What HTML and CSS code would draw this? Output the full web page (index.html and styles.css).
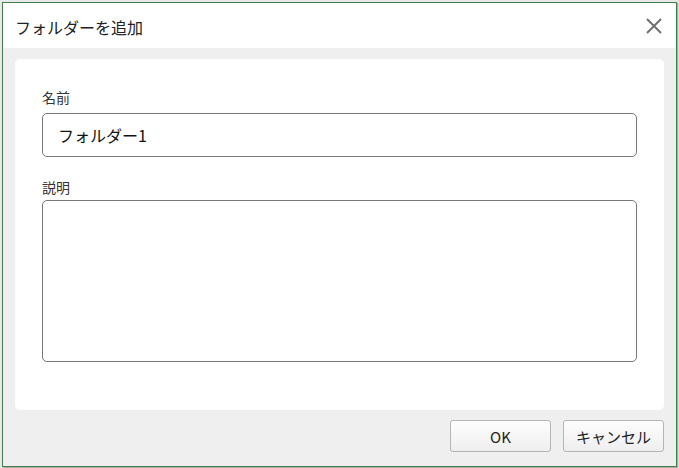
FILE: index.html
```html
<!DOCTYPE html>
<html lang="ja">
<head>
<meta charset="utf-8">
<link rel="stylesheet" href="styles.css">
</head>
<body>
<div class="dialog">
  <div class="titlebar">
    <span class="title">フォルダーを追加</span>
    <svg class="close" width="16" height="16" viewBox="0 0 16 16"><path d="M1 1L15 15M15 1L1 15" stroke="#707070" stroke-width="2" fill="none"/></svg>
  </div>
  <div class="body">
    <div class="panel">
      <label class="label">名前</label>
      <div class="input">フォルダー1</div>
      <label class="label label2">説明</label>
      <div class="textarea"></div>
    </div>
    <div class="buttons">
      <button class="btn">OK</button>
      <button class="btn">キャンセル</button>
    </div>
  </div>
</div>
</body>
</html>
```

FILE: styles.css
```css
html, body {
  margin: 0;
  padding: 0;
  background: #e9e9e9;
  width: 679px;
  height: 468px;
  overflow: hidden;
}
body {
  padding: 2px 0 0 2px;
  box-sizing: border-box;
  font-family: "Noto Sans CJK JP", "Noto Sans", sans-serif;
}
.dialog {
  width: 675px;
  height: 465px;
  box-sizing: border-box;
  border: 1px solid #3f7f47;
  background: #efefef;
  box-shadow: 1px 1px 1px rgba(0,0,0,0.25);
  display: flex;
  flex-direction: column;
}
.titlebar {
  height: 45px;
  background: #ffffff;
  display: flex;
  align-items: center;
  justify-content: space-between;
  padding: 0 14px 0 12px;
  flex-shrink: 0;
}
.title {
  font-size: 16px;
  color: #222;
  margin-top: 2px;
}
.close {
  display: block;
}
.body {
  flex: 1;
  padding: 11px 12px 0 12px;
  display: flex;
  flex-direction: column;
}
.panel {
  background: #fff;
  border-radius: 5px;
  height: 351px;
  box-sizing: border-box;
  padding: 28px 27px 0 27px;
  display: flex;
  flex-direction: column;
}
.label {
  font-size: 14px;
  color: #333;
  line-height: 20px;
  height: 20px;
}
.label2 {
  margin-top: 20px;
}
.input {
  margin-top: 6px;
  height: 44px;
  box-sizing: border-box;
  border: 1px solid #777;
  border-radius: 5px;
  padding: 0 15px;
  font-size: 16px;
  line-height: 42px;
  color: #111;
}
.textarea {
  margin-top: 3px;
  height: 162px;
  box-sizing: border-box;
  border: 1px solid #777;
  border-radius: 5px;
}
.buttons {
  display: flex;
  justify-content: flex-end;
  gap: 12px;
  margin-top: 10px;
}
.btn {
  width: 101px;
  height: 32px;
  box-sizing: border-box;
  border: 1px solid #b5b5b5;
  border-radius: 3px;
  background: linear-gradient(#fdfdfd, #eeeeee);
  font-family: "Noto Sans CJK JP", "Noto Sans", sans-serif;
  font-size: 15px;
  color: #222;
  padding: 0;
}
```
